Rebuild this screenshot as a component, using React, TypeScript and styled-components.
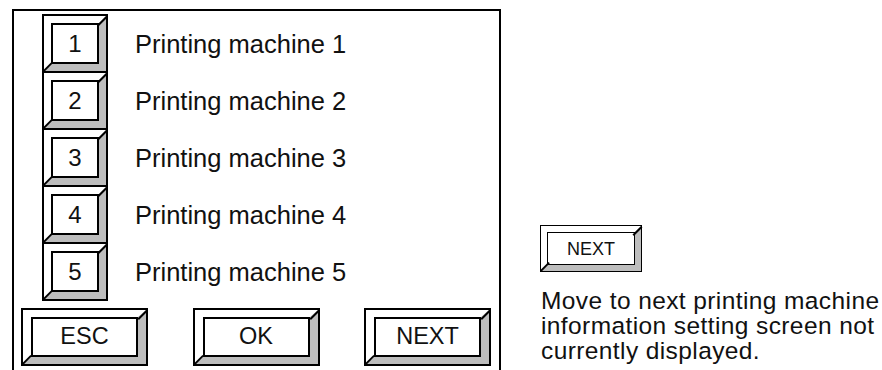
import * as React from 'react';
import styled, { createGlobalStyle } from 'styled-components';

const GlobalStyle = createGlobalStyle`
  html, body {
    margin: 0;
    padding: 0;
    background: #fff;
  }
  body {
    font-family: "Liberation Sans", Arial, Helvetica, sans-serif;
    color: #111;
  }
`;

const Page = styled.div`
  display: flex;
  align-items: stretch;
  gap: 39px;
  width: 882px;
  height: 370px;
  padding: 9px 0 0 12px;
  box-sizing: border-box;
  overflow: hidden;
`;

const Panel = styled.div`
  box-sizing: border-box;
  width: 489px;
  height: 361px;
  border: 2px solid #000;
  border-bottom: none;
  padding-top: 3px;
  display: flex;
  flex-direction: column;
`;

const MachineList = styled.div`
  display: flex;
  flex-direction: column;
  padding-left: 28px;
`;

const MachineRow = styled.div`
  display: flex;
  align-items: center;
  gap: 27px;
  & + & {
    margin-top: -2px;
  }
`;

const MachineName = styled.span`
  font-size: 25.5px;
  white-space: nowrap;
  padding-top: 2px;
`;

const KeyBox = styled.div<{ $w: number; $h: number; $edge: number }>`
  position: relative;
  box-sizing: border-box;
  flex: none;
  width: ${(p) => p.$w}px;
  height: ${(p) => p.$h}px;
  border: ${(p) => p.$edge}px solid #000;
  display: flex;

  &::before,
  &::after {
    content: '';
    position: absolute;
    width: 12px;
    height: 1.5px;
    background: #000;
  }
  &::before {
    top: 0;
    right: 0;
    transform-origin: right top;
    transform: rotate(-45deg);
  }
  &::after {
    bottom: 0;
    left: 0;
    transform-origin: left bottom;
    transform: rotate(-45deg);
  }
`;

const KeyBevel = styled.div<{ $bevel: string }>`
  flex: 1;
  display: flex;
  border-style: solid;
  border-width: ${(p) => p.$bevel};
  border-color: #fff #bdbdbd #bdbdbd #fff;
`;

const KeyFace = styled.div<{ $edge: number; $fs: number }>`
  flex: 1;
  display: flex;
  align-items: center;
  justify-content: center;
  background: #fff;
  border: ${(p) => p.$edge}px solid #000;
  font-size: ${(p) => p.$fs}px;
  line-height: 1;
`;

type KeyProps = {
  label: string;
  w: number;
  h: number;
  edge?: number;
  bevel: string;
  fs: number;
};

function Key({ label, w, h, edge = 2, bevel, fs }: KeyProps) {
  return (
    <KeyBox $w={w} $h={h} $edge={edge}>
      <KeyBevel $bevel={bevel}>
        <KeyFace $edge={edge} $fs={fs}>{label}</KeyFace>
      </KeyBevel>
    </KeyBox>
  );
}

const ButtonRow = styled.div`
  display: flex;
  justify-content: space-between;
  padding: 0 8px 0 7px;
  margin-top: 7px;
`;

const Side = styled.div`
  align-self: flex-end;
  display: flex;
  flex-direction: column;
  align-items: flex-start;
  padding-bottom: 7px;
`;

const Note = styled.p`
  margin: 16px 0 0 1px;
  font-size: 24.5px;
  letter-spacing: 0.4px;
  line-height: 25px;
  white-space: nowrap;
`;

const machines = [1, 2, 3, 4, 5];

export default function App() {
  return (
    <>
      <GlobalStyle />
      <Page>
        <Panel>
          <MachineList>
            {machines.map((n) => (
              <MachineRow key={n}>
                <Key label={String(n)} w={66} h={59} bevel="7px" fs={24} />
                <MachineName>Printing machine {n}</MachineName>
              </MachineRow>
            ))}
          </MachineList>
          <ButtonRow>
            <Key label="ESC" w={127} h={58} bevel="7px 8px" fs={23.5} />
            <Key label="OK" w={127} h={58} bevel="7px 8px" fs={23.5} />
            <Key label="NEXT" w={127} h={58} bevel="7px 8px" fs={23.5} />
          </ButtonRow>
        </Panel>
        <Side>
          <Key label="NEXT" w={102} h={47} edge={1.5} bevel="6px" fs={18} />
          <Note>
            Move to next printing machine
            <br />
            information setting screen not
            <br />
            currently displayed.
          </Note>
        </Side>
      </Page>
    </>
  );
}
